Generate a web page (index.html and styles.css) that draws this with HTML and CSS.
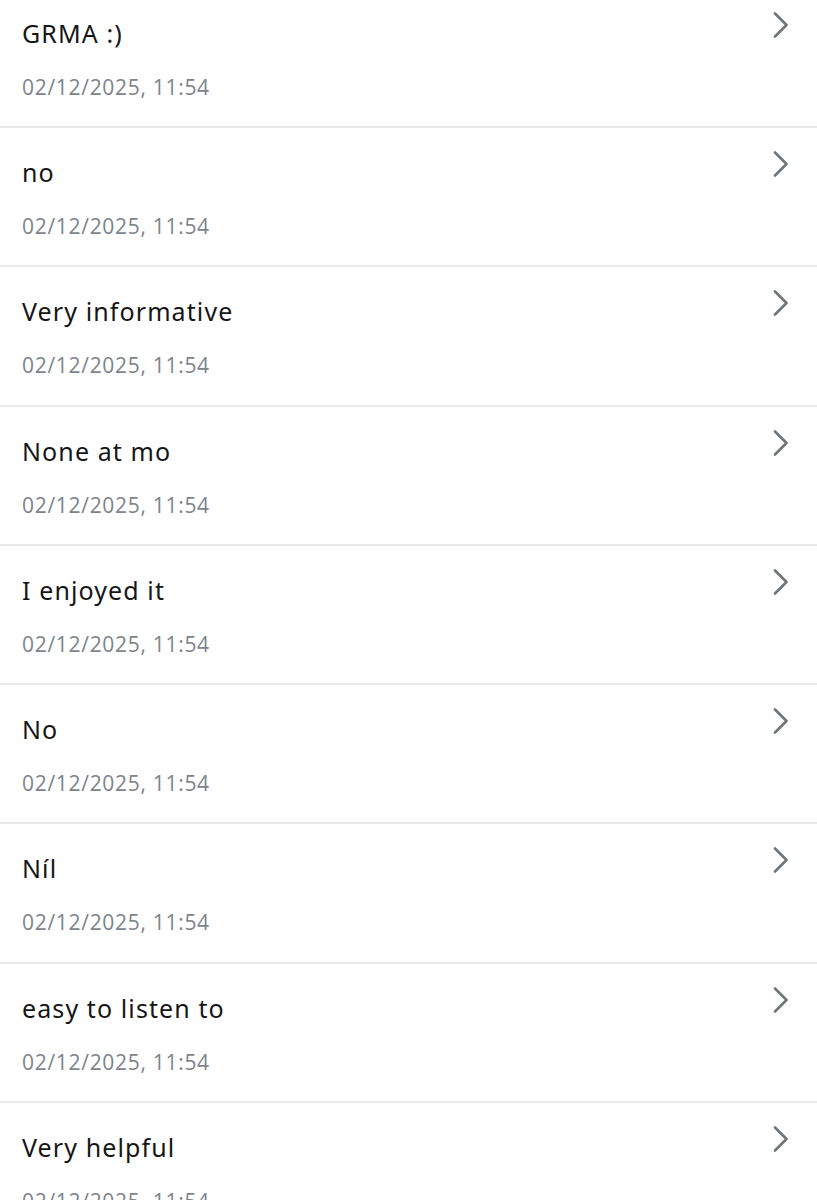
FILE: index.html
```html
<!DOCTYPE html>
<html lang="en">
<head>
<meta charset="utf-8">
<title>Responses</title>
<link rel="stylesheet" href="styles.css">
</head>
<body>
<ul class="list">
  <li class="row"><div class="text"><div class="title">GRMA :)</div><div class="date">02/12/2025, 11:54</div></div><svg class="chev" viewBox="0 0 16 26"><path d="M2 1.5 L13.5 13 L2 24.5"/></svg></li>
  <li class="row"><div class="text"><div class="title">no</div><div class="date">02/12/2025, 11:54</div></div><svg class="chev" viewBox="0 0 16 26"><path d="M2 1.5 L13.5 13 L2 24.5"/></svg></li>
  <li class="row"><div class="text"><div class="title">Very informative</div><div class="date">02/12/2025, 11:54</div></div><svg class="chev" viewBox="0 0 16 26"><path d="M2 1.5 L13.5 13 L2 24.5"/></svg></li>
  <li class="row"><div class="text"><div class="title">None at mo</div><div class="date">02/12/2025, 11:54</div></div><svg class="chev" viewBox="0 0 16 26"><path d="M2 1.5 L13.5 13 L2 24.5"/></svg></li>
  <li class="row"><div class="text"><div class="title">I enjoyed it</div><div class="date">02/12/2025, 11:54</div></div><svg class="chev" viewBox="0 0 16 26"><path d="M2 1.5 L13.5 13 L2 24.5"/></svg></li>
  <li class="row"><div class="text"><div class="title">No</div><div class="date">02/12/2025, 11:54</div></div><svg class="chev" viewBox="0 0 16 26"><path d="M2 1.5 L13.5 13 L2 24.5"/></svg></li>
  <li class="row"><div class="text"><div class="title">Níl</div><div class="date">02/12/2025, 11:54</div></div><svg class="chev" viewBox="0 0 16 26"><path d="M2 1.5 L13.5 13 L2 24.5"/></svg></li>
  <li class="row"><div class="text"><div class="title">easy to listen to</div><div class="date">02/12/2025, 11:54</div></div><svg class="chev" viewBox="0 0 16 26"><path d="M2 1.5 L13.5 13 L2 24.5"/></svg></li>
  <li class="row"><div class="text"><div class="title">Very helpful</div><div class="date">02/12/2025, 11:54</div></div><svg class="chev" viewBox="0 0 16 26"><path d="M2 1.5 L13.5 13 L2 24.5"/></svg></li>
</ul>
</body>
</html>
```

FILE: styles.css
```css
html, body {
  margin: 0;
  padding: 0;
  background: #ffffff;
  overflow: hidden;
}

.list {
  list-style: none;
  margin: -11.3px 0 0 0;
  padding: 0;
}

.row {
  box-sizing: border-box;
  height: 139.3px;
  border-bottom: 2px solid #e9e9ea;
  display: flex;
  justify-content: space-between;
  align-items: flex-start;
  padding: 0 28px 0 22px;
}

.text {
  display: flex;
  flex-direction: column;
}

.title {
  font-family: "Noto Sans", sans-serif;
  font-size: 25px;
  line-height: 30px;
  letter-spacing: 1.1px;
  color: #161616;
  margin-top: 29px;
}

.date {
  font-family: "Open Sans", sans-serif;
  font-size: 21px;
  line-height: 24px;
  letter-spacing: 0.7px;
  color: #7d848b;
  margin-top: 27px;
}

.chev {
  width: 16px;
  height: 26px;
  margin-top: 23px;
  fill: none;
  stroke: #6f757b;
  stroke-width: 2.6;
  stroke-linecap: round;
  stroke-linejoin: round;
}
```
